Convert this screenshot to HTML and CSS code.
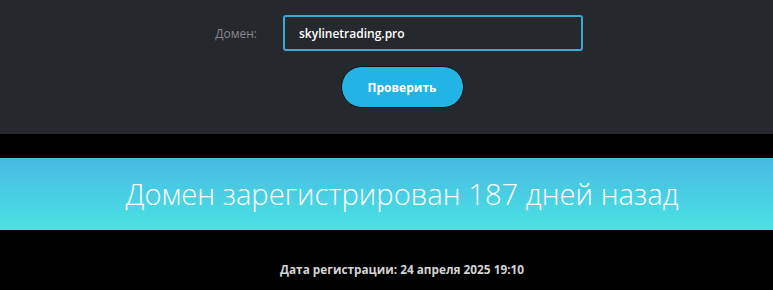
FILE: index.html
```html
<!DOCTYPE html>
<html lang="ru">
<head>
<meta charset="utf-8">
<link rel="stylesheet" href="styles.css">
</head>
<body>
<section class="form-panel">
  <div class="column">
    <div class="field-row">
      <label class="label">Домен:</label>
      <div class="input">skylinetrading.pro</div>
    </div>
    <button class="btn">Проверить</button>
  </div>
</section>
<section class="banner">
  <h1 class="banner-text">Домен зарегистрирован 187 дней назад</h1>
</section>
<section class="details">
  <p class="date">Дата регистрации: 24 апреля 2025 19:10</p>
</section>
</body>
</html>
```

FILE: styles.css
```css
html, body {
  margin: 0;
  padding: 0;
  background: #000;
  font-family: "Open Sans", "Noto Sans", sans-serif;
}
.form-panel {
  background: #25282d;
  height: 134px;
  box-sizing: border-box;
  padding-top: 15px;
}
.column {
  display: flex;
  flex-direction: column;
  align-items: center;
  padding-left: 31px;
}
.field-row {
  display: flex;
  align-items: center;
  margin-right: 31px;
}
.label {
  color: #85888c;
  font-size: 12px;
  width: 67px;
  text-align: right;
  margin-right: 26px;
}
.input {
  width: 300px;
  height: 36px;
  box-sizing: border-box;
  border: 2px solid #3aa9d6;
  border-radius: 3px;
  color: #fff;
  font-weight: 600;
  font-size: 12px;
  padding-left: 14px;
  display: flex;
  align-items: center;
}
.btn {
  margin-top: 15px;
  width: 123px;
  height: 42px;
  border-radius: 21px;
  border: 1px solid #111;
  background: #23b4e6;
  color: #fff;
  font-family: inherit;
  font-weight: 700;
  font-size: 12px;
}
.banner {
  margin-top: 24px;
  height: 72px;
  background: linear-gradient(#48b9e4, #4ae3e3);
  display: flex;
  align-items: center;
  justify-content: center;
  padding-left: 31px;
}
.banner-text {
  margin: 0;
  color: #fff;
  font-weight: 300;
  font-size: 29.2px;
}
.details {
  display: flex;
  justify-content: center;
  padding-left: 31px;
}
.date {
  margin: 31px 0 0;
  color: #d4d4d4;
  font-weight: 700;
  font-size: 11.8px;
}
```
